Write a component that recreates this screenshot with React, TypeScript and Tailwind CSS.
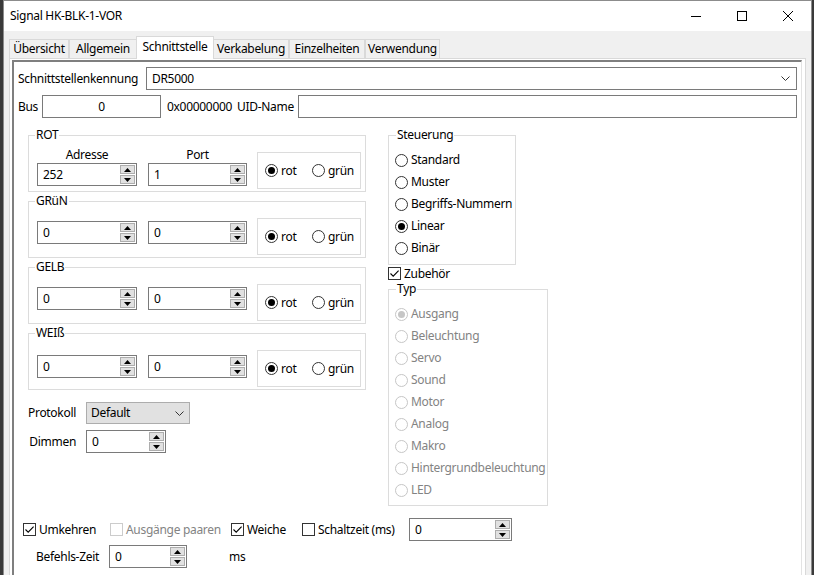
import React from "react";

type BoxProps = { checked?: boolean; disabled?: boolean };

function CheckBox({ checked = false, disabled = false }: BoxProps) {
  return (
    <span
      className={`flex h-[13px] w-[13px] shrink-0 items-center justify-center border bg-white ${
        disabled ? "border-[#cccccc]" : "border-[#333333]"
      }`}
    >
      {checked && (
        <svg width="11" height="11" viewBox="0 0 11 11">
          <path d="M1.5 5.5 L4.2 8.2 L9.6 2.6" fill="none" stroke="#000" strokeWidth="1.1" />
        </svg>
      )}
    </span>
  );
}

function RadioDot({ checked = false, disabled = false }: BoxProps) {
  return (
    <span
      className={`flex h-[13px] w-[13px] shrink-0 items-center justify-center rounded-full border bg-white ${
        disabled ? "border-[#c6c6c6]" : "border-[#333333]"
      }`}
    >
      {checked && (
        <span className={`h-[7px] w-[7px] rounded-full ${disabled ? "bg-[#c6c6c6]" : "bg-[#000000]"}`} />
      )}
    </span>
  );
}

function Arrow({ up }: { up?: boolean }) {
  return (
    <svg width="7" height="4" viewBox="0 0 7 4">
      <path d={up ? "M0 4 L3.5 0 L7 4 Z" : "M0 0 L3.5 4 L7 0 Z"} fill="#000" />
    </svg>
  );
}

function SpinBox({ value, className = "" }: { value: string; className?: string }) {
  return (
    <div className={`flex h-[23px] shrink-0 border border-[#7a7a7a] bg-white ${className}`}>
      <span className="flex-1 pl-[5px] leading-[21px]">{value}</span>
      <div className="flex w-[16px] flex-col gap-[1px] py-[1px] pr-[1px]">
        <span className="flex flex-1 items-center justify-center border border-[#adadad] bg-[#e1e1e1]">
          <Arrow up />
        </span>
        <span className="flex flex-1 items-center justify-center border border-[#adadad] bg-[#e1e1e1]">
          <Arrow />
        </span>
      </div>
    </div>
  );
}

function Chevron() {
  return (
    <svg width="9" height="5" viewBox="0 0 9 5">
      <path d="M0.5 0.5 L4.5 4.5 L8.5 0.5" fill="none" stroke="#333" strokeWidth="1" />
    </svg>
  );
}

function Group({
  title,
  className = "",
  legendClass = "ml-[6px]",
  children,
}: {
  title: string;
  className?: string;
  legendClass?: string;
  children: React.ReactNode;
}) {
  return (
    <fieldset className={`shrink-0 border border-[#dcdcdc] ${className}`}>
      <legend className={`px-[1px] leading-[16px] ${legendClass}`}>{title}</legend>
      {children}
    </fieldset>
  );
}

function SignalGroup({
  title,
  addr,
  port,
  header = false,
  spinTop,
}: {
  title: string;
  addr: string;
  port: string;
  header?: boolean;
  spinTop: string;
}) {
  return (
    <Group title={title} className="w-[338px] pb-[2px]">
      <div className="flex items-start pl-[8px]">
        <div className={`flex w-[100px] flex-col ${spinTop}`}>
          {header && <span className="text-center leading-[16px]">Adresse</span>}
          <SpinBox value={addr} className="w-[100px]" />
        </div>
        <div className={`ml-[11px] flex w-[99px] flex-col ${spinTop}`}>
          {header && <span className="text-center leading-[16px]">Port</span>}
          <SpinBox value={port} className="w-[99px]" />
        </div>
        <div className="ml-[10px] mt-[9px] flex h-[37px] w-[104px] items-center border border-[#dcdcdc] pl-[7px]">
          <label className="flex w-[47px] items-center gap-[3px]">
            <RadioDot checked />
            <span>rot</span>
          </label>
          <label className="flex items-center gap-[3px]">
            <RadioDot />
            <span>grün</span>
          </label>
        </div>
      </div>
    </Group>
  );
}

const steuerung = ["Standard", "Muster", "Begriffs-Nummern", "Linear", "Binär"];
const typen = [
  "Ausgang",
  "Beleuchtung",
  "Servo",
  "Sound",
  "Motor",
  "Analog",
  "Makro",
  "Hintergrundbeleuchtung",
  "LED",
];
const tabs = ["Übersicht", "Allgemein", "Schnittstelle", "Verkabelung", "Einzelheiten", "Verwendung"];
const tabWidths = ["w-[60px]", "w-[67px]", "w-[78px]", "w-[75px]", "w-[76px]", "w-[75px]"];

export default function App() {
  return (
    <div className="h-[575px] w-[814px] overflow-hidden bg-[#3a3a3a] pl-[3px] pr-[2px] font-['Noto_Sans',sans-serif] text-[12px] tracking-[-0.3px] text-black">
      <div className="flex h-[590px] flex-col border border-[#8c8c8c] bg-[#f0f0f0]">
        {/* title bar */}
        <div className="flex h-[30px] shrink-0 items-center bg-white">
          <span className="pl-[6px]">Signal HK-BLK-1-VOR</span>
          <div className="ml-auto flex h-full">
            <div className="flex w-[46px] items-center justify-center">
              <span className="h-px w-[10px] bg-[#000000]" />
            </div>
            <div className="flex w-[46px] items-center justify-center">
              <span className="h-[10px] w-[10px] border border-[#000000]" />
            </div>
            <div className="flex w-[46px] items-center justify-center">
              <svg width="10" height="10" viewBox="0 0 10 10">
                <path d="M0 0 L10 10 M10 0 L0 10" stroke="#000" strokeWidth="1" />
              </svg>
            </div>
          </div>
        </div>

        {/* tab strip */}
        <div className="flex h-[27px] shrink-0 items-end pl-[5px]">
          {tabs.map((t, i) =>
            i === 2 ? (
              <div
                key={t}
                className={`relative z-10 -mb-px flex h-[23px] items-center justify-center border border-b-0 border-[#d9d9d9] bg-white pb-[2px] ${tabWidths[i]}`}
              >
                {t}
              </div>
            ) : (
              <div
                key={t}
                className={`flex h-[19px] items-center justify-center border border-b-0 border-[#d9d9d9] bg-[#f0f0f0] ${tabWidths[i]} ${
                  i === 3 ? "border-l-0" : ""
                } ${i === 1 ? "border-r-0" : ""}`}
              >
                {t}
              </div>
            )
          )}
        </div>

        {/* tab page */}
        <div className="mr-[5px] ml-[5px] flex flex-1 flex-col border border-[#d9d9d9] bg-white pl-[2px] pr-[3px] pt-[1px]">
          <div className="flex flex-1 flex-col border-l-2 border-t-2 border-r border-[#7f7f7f] border-r-[#e3e3e3] pl-[4px] pr-[4px] pt-[5px]">
            {/* interface id */}
            <div className="flex h-[23px] items-center">
              <span className="w-[128px] shrink-0">Schnittstellenkennung</span>
              <div className="flex h-[23px] flex-1 items-center border border-[#7a7a7a] bg-white pl-[5px] pr-[6px]">
                <span className="flex-1">DR5000</span>
                <Chevron />
              </div>
            </div>

            {/* bus row */}
            <div className="mt-[5px] flex h-[23px] items-center">
              <span className="w-[24px] shrink-0">Bus</span>
              <div className="flex h-[23px] w-[119px] shrink-0 items-center justify-center border border-[#7a7a7a] bg-white">
                0
              </div>
              <span className="ml-[6px] w-[70px] shrink-0">0x00000000</span>
              <span className="w-[61px] shrink-0">UID-Name</span>
              <div className="h-[23px] flex-1 border border-[#7a7a7a] bg-white" />
            </div>

            {/* main area */}
            <div className="ml-[10px] mt-[9px] flex items-start">
              <div className="flex w-[338px] shrink-0 flex-col">
                <div className="flex flex-col gap-[1px]">
                  <SignalGroup title="ROT" addr="252" port="1" header spinTop="mt-[4px]" />
                  <SignalGroup title="GRüN" addr="0" port="0" spinTop="mt-[12px]" />
                  <SignalGroup title="GELB" addr="0" port="0" spinTop="mt-[12px]" />
                  <SignalGroup title="WEIß" addr="0" port="0" spinTop="mt-[14px]" />
                </div>

                <div className="mt-[12px] flex items-center">
                  <span className="w-[48px] shrink-0 text-right whitespace-nowrap">Protokoll</span>
                  <div className="ml-[10px] flex h-[22px] w-[104px] items-center border border-[#adadad] bg-[#e1e1e1] pl-[4px] pr-[5px]">
                    <span className="flex-1">Default</span>
                    <Chevron />
                  </div>
                </div>
                <div className="mt-[6px] flex items-center">
                  <span className="w-[48px] shrink-0 text-right">Dimmen</span>
                  <SpinBox value="0" className="ml-[10px] w-[80px]" />
                </div>
              </div>

              <div className="ml-[22px] flex flex-col">
                <Group title="Steuerung" legendClass="ml-[7px]" className="w-[128px] pb-[5px]">
                  <div className="mt-[6px] flex flex-col pl-[6px]">
                    {steuerung.map((s) => (
                      <label key={s} className="flex h-[22px] items-center gap-[3px]">
                        <RadioDot checked={s === "Linear"} />
                        <span>{s}</span>
                      </label>
                    ))}
                  </div>
                </Group>
                <label className="flex h-[16px] items-center gap-[3px] pt-px">
                  <CheckBox checked />
                  <span>Zubehör</span>
                </label>
                <Group title="Typ" legendClass="ml-[7px]" className="w-[160px] pb-[4px]">
                  <div className="mt-[6px] flex flex-col pl-[6px]">
                    {typen.map((s) => (
                      <label key={s} className="flex h-[22px] items-center gap-[3px] text-[#838383]">
                        <RadioDot disabled checked={s === "Ausgang"} />
                        <span>{s}</span>
                      </label>
                    ))}
                  </div>
                </Group>
              </div>
            </div>

            {/* options row */}
            <div className="ml-[5px] mt-[12px] flex h-[23px] items-center">
              <label className="flex w-[87px] shrink-0 items-center gap-[3px]">
                <CheckBox checked />
                <span>Umkehren</span>
              </label>
              <label className="flex w-[121px] shrink-0 items-center gap-[3px] text-[#838383]">
                <CheckBox disabled />
                <span>Ausgänge paaren</span>
              </label>
              <label className="flex w-[71px] shrink-0 items-center gap-[3px]">
                <CheckBox checked />
                <span>Weiche</span>
              </label>
              <label className="flex w-[107px] shrink-0 items-center gap-[3px]">
                <CheckBox />
                <span>Schaltzeit (ms)</span>
              </label>
              <SpinBox value="0" className="w-[103px]" />
            </div>

            <div className="mt-[4px] flex h-[23px] items-center">
              <span className="ml-[18px] w-[73px] shrink-0">Befehls-Zeit</span>
              <SpinBox value="0" className="w-[78px]" />
              <span className="ml-[42px]">ms</span>
            </div>
          </div>
        </div>
      </div>
    </div>
  );
}
